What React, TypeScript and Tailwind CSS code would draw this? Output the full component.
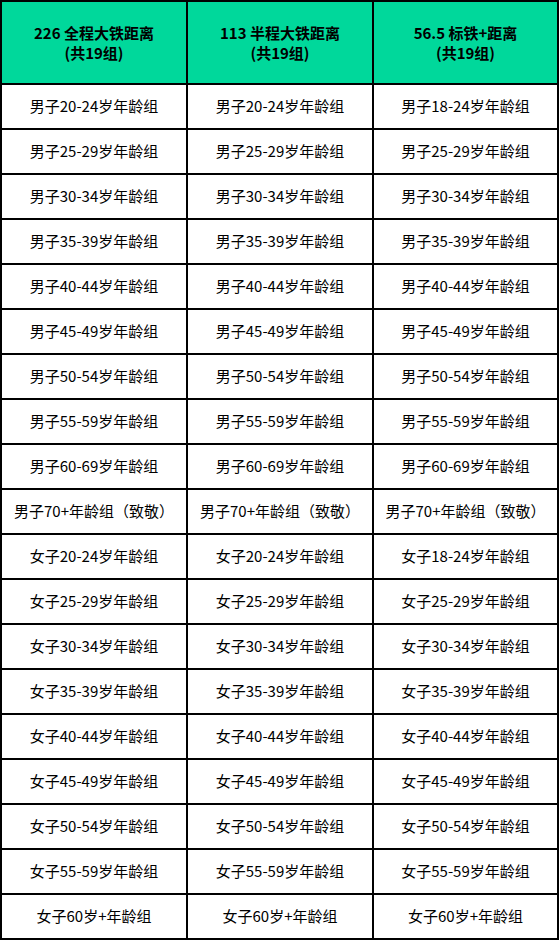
const headers = [
  ["226 全程大铁距离", "(共19组)"],
  ["113 半程大铁距离", "(共19组)"],
  ["56.5 标铁+距离", "(共19组)"],
]

const ages = ["25-29", "30-34", "35-39", "40-44", "45-49", "50-54", "55-59"]

const rows: string[][] = [
  ["男子20-24岁年龄组", "男子20-24岁年龄组", "男子18-24岁年龄组"],
  ...ages.map(a => [`男子${a}岁年龄组`, `男子${a}岁年龄组`, `男子${a}岁年龄组`]),
  ["男子60-69岁年龄组", "男子60-69岁年龄组", "男子60-69岁年龄组"],
  ["男子70+年龄组（致敬）", "男子70+年龄组（致敬）", "男子70+年龄组（致敬）"],
  ["女子20-24岁年龄组", "女子20-24岁年龄组", "女子18-24岁年龄组"],
  ...ages.map(a => [`女子${a}岁年龄组`, `女子${a}岁年龄组`, `女子${a}岁年龄组`]),
  ["女子60岁+年龄组", "女子60岁+年龄组", "女子60岁+年龄组"],
]

export default function App() {
  return (
    <div
      className="w-[559px] h-[940px] bg-black p-[2px] grid grid-cols-[184px_184px_183px] grid-rows-[81px_repeat(19,43px)] gap-[2px] text-black"
      style={{ fontFamily: '"Noto Sans CJK SC", "Noto Sans", sans-serif' }}
    >
      {headers.map(([a, b]) => (
        <div key={a} className="bg-[#00d89b] flex flex-col items-center justify-center text-[15px] font-bold leading-[20px]">
          <span>{a}</span>
          <span>{b}</span>
        </div>
      ))}
      {rows.map((r, i) =>
        r.map((c, j) => (
          <div key={`${i}-${j}`} className="bg-white flex items-center justify-center text-[15px] whitespace-nowrap">
            {c}
          </div>
        ))
      )}
    </div>
  )
}
